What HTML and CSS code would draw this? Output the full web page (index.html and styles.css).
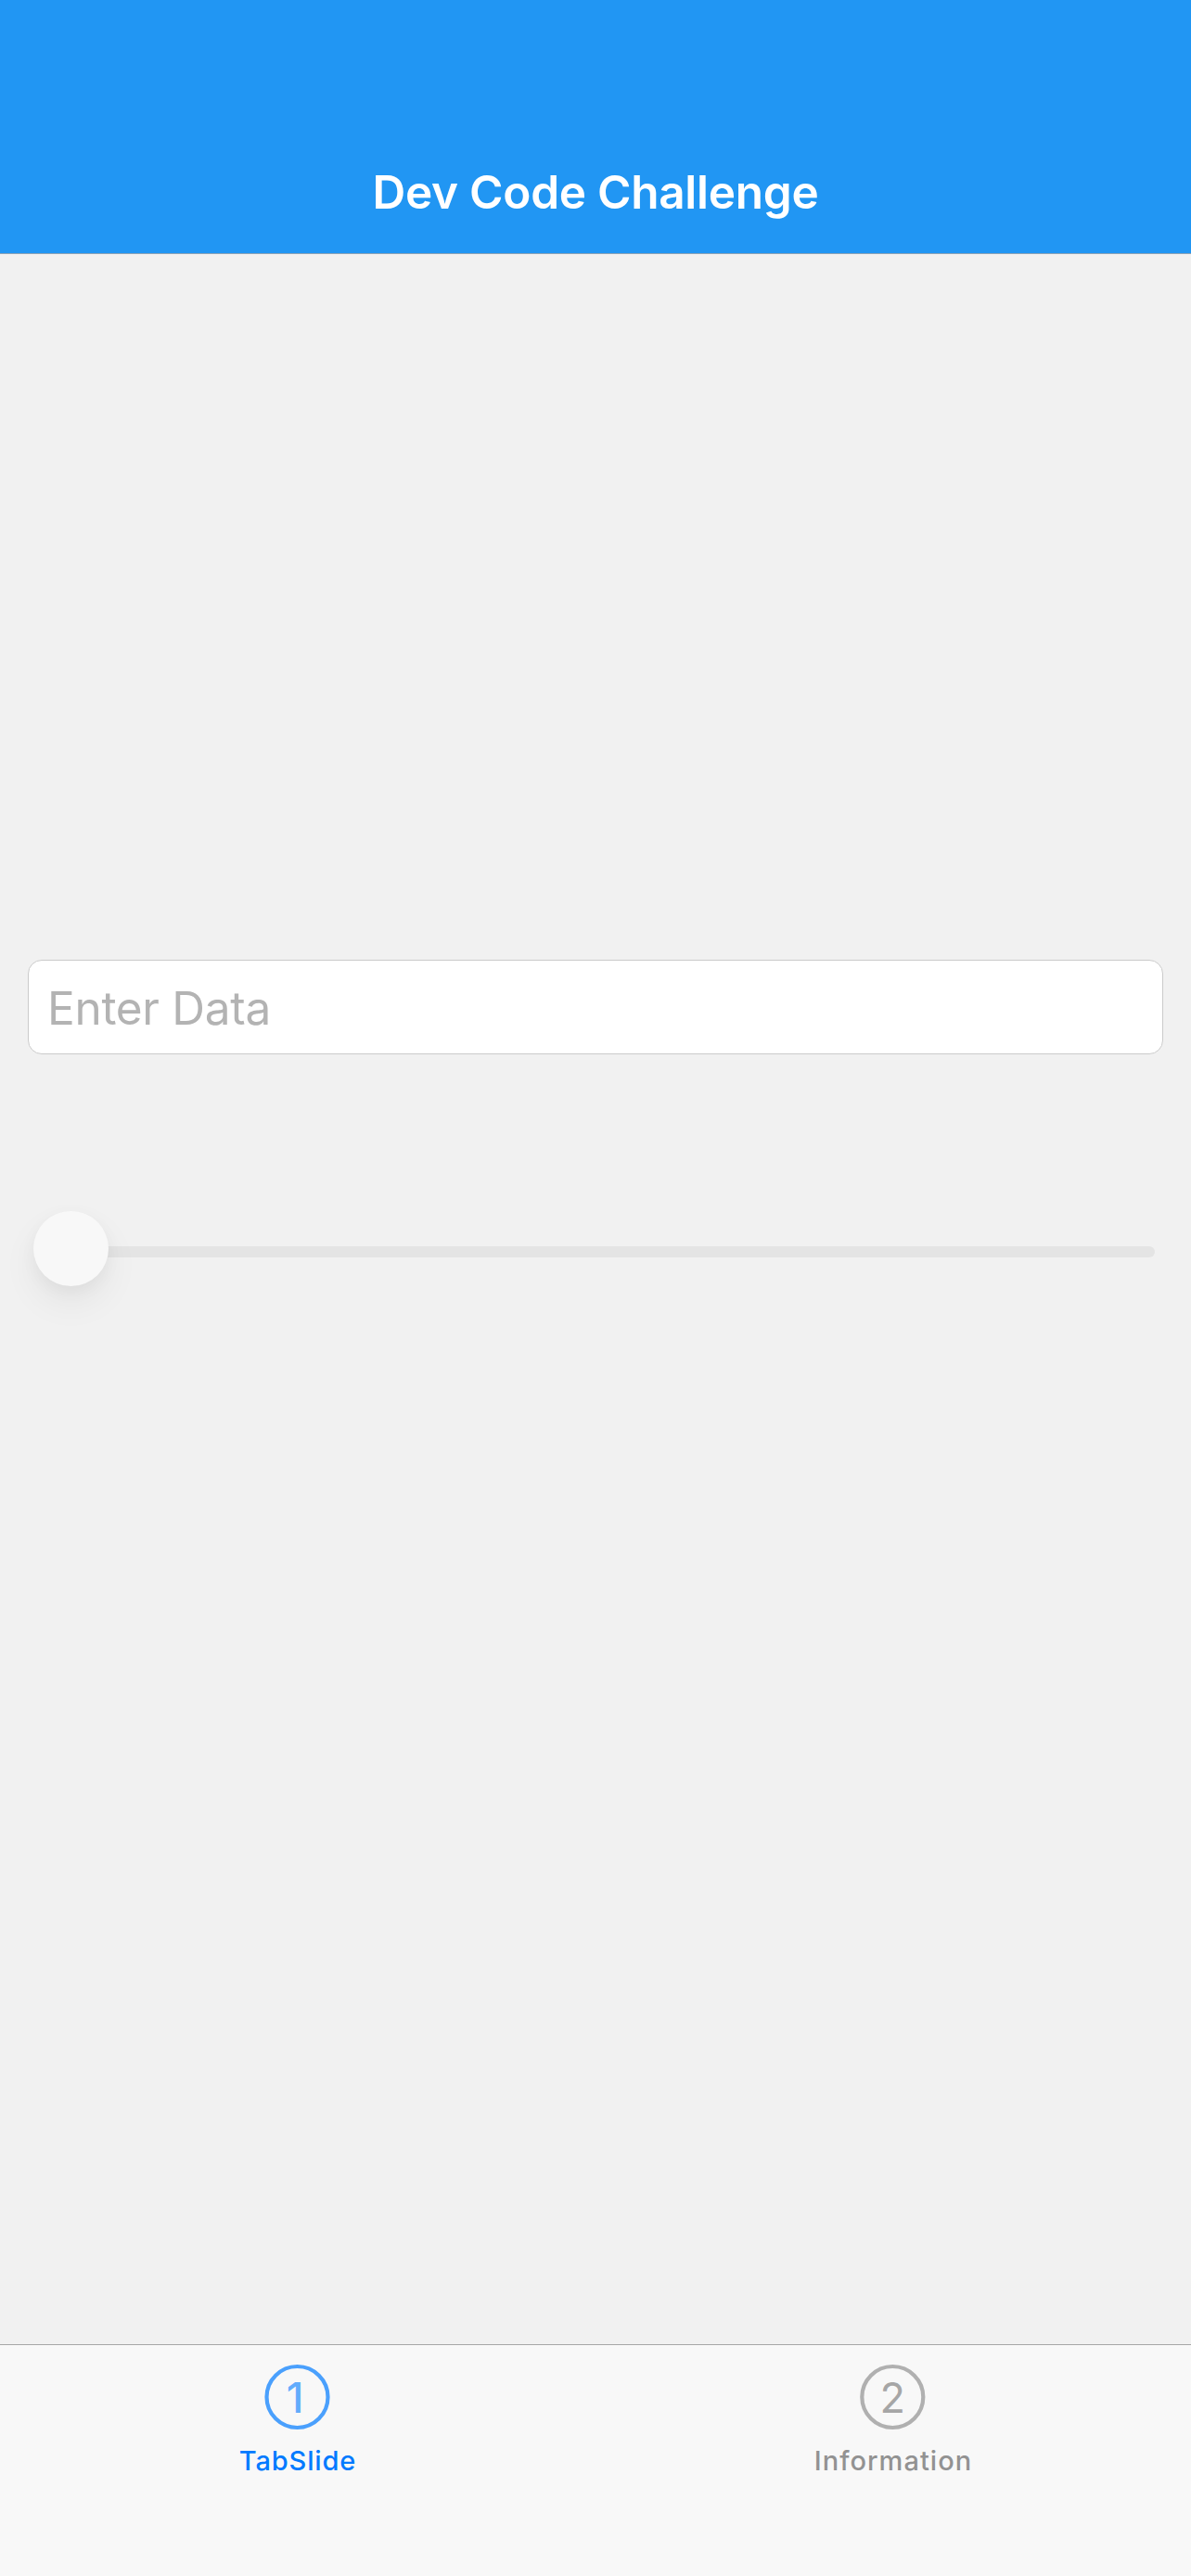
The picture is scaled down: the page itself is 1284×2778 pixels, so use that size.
FILE: index.html
```html
<!DOCTYPE html>
<html lang="en">
<head>
<meta charset="utf-8">
<title>Dev Code Challenge</title>
<link rel="stylesheet" href="styles.css">
</head>
<body>
<div class="app">
  <header class="nav-bar"><h1 class="nav-title">Dev Code Challenge</h1></header>
  <main class="content">
    <div class="field"><span class="placeholder">Enter Data</span></div>
    <div class="slider">
      <div class="track"></div>
      <div class="thumb"></div>
    </div>
  </main>
  <nav class="tab-bar">
    <a class="tab tab-active">
      <svg class="tab-icon" viewBox="0 0 72 72">
        <circle class="ring" cx="35.5" cy="36" r="33"/>
        <text class="digit digit-one" x="33" y="52.5">1</text>
      </svg>
      <span class="tab-label label-slide">TabSlide</span>
    </a>
    <a class="tab">
      <svg class="tab-icon" viewBox="0 0 72 72">
        <circle class="ring" cx="35.3" cy="36" r="33"/>
        <text class="digit" x="35.3" y="52.5">2</text>
      </svg>
      <span class="tab-label label-info">Information</span>
    </a>
  </nav>
</div>
</body>
</html>
```
FILE: styles.css
```css
* { box-sizing: border-box; }
body {
  margin: 0;
  background: #f1f1f1;
  font-family: Inter, "Liberation Sans", sans-serif;
}
.app {
  display: flex;
  flex-direction: column;
  height: 2778px;
}
.nav-bar {
  height: 274px;
  padding-top: 141px;
  background: #2196f3;
  border-bottom: 1px solid #8ca3b6;
}
.nav-title {
  margin: 0;
  text-align: center;
  font-size: 49.5px;
  line-height: 132px;
  font-weight: 560;
  letter-spacing: -0.27px;
  color: #fff;
}
.content {
  flex: 1;
  padding: 761px 30px 0;
}
.field {
  height: 102px;
  padding-left: 20px;
  background: #fff;
  border: 1px solid #cbcbcb;
  border-radius: 15px;
}
.placeholder {
  font-size: 49.5px;
  line-height: 103px;
  letter-spacing: -0.3px;
  color: #b3b3b3;
}
.slider {
  display: grid;
  align-items: center;
  height: 81px;
  margin: 169px 9px 0 6px;
}
.track, .thumb { grid-area: 1 / 1; }
.track {
  height: 12px;
  margin: 7px 0 0 3px;
  border-radius: 6px;
  background: #e4e4e4;
}
.thumb {
  width: 81px;
  height: 81px;
  border-radius: 50%;
  background: #f8f8f8;
  box-shadow: 0 18px 39px rgba(0, 0, 0, 0.06), 0 6px 18px rgba(0, 0, 0, 0.04);
}
.tab-bar {
  display: flex;
  height: 250px;
  background: #f8f8f8;
  border-top: 1px solid #a7a7a7;
}
.tab {
  flex: 1;
  display: flex;
  flex-direction: column;
  align-items: center;
  padding-top: 20px;
  color: #929292;
}
.tab-active { color: #007aff; }
.tab-icon {
  width: 72px;
  height: 72px;
}
.ring {
  fill: none;
  stroke: currentColor;
  stroke-width: 4.2;
  opacity: 0.7;
}
.digit {
  fill: currentColor;
  font-size: 45px;
  font-weight: 400;
  text-anchor: middle;
  opacity: 0.8;
}
.digit-one { font-weight: 550; opacity: 0.6; }
.tab-label {
  margin-top: 13px;
  font-size: 29px;
  line-height: 40px;
  font-weight: 450;
}
.label-slide { letter-spacing: 0.85px; }
.label-info { letter-spacing: 1.05px; }
```
